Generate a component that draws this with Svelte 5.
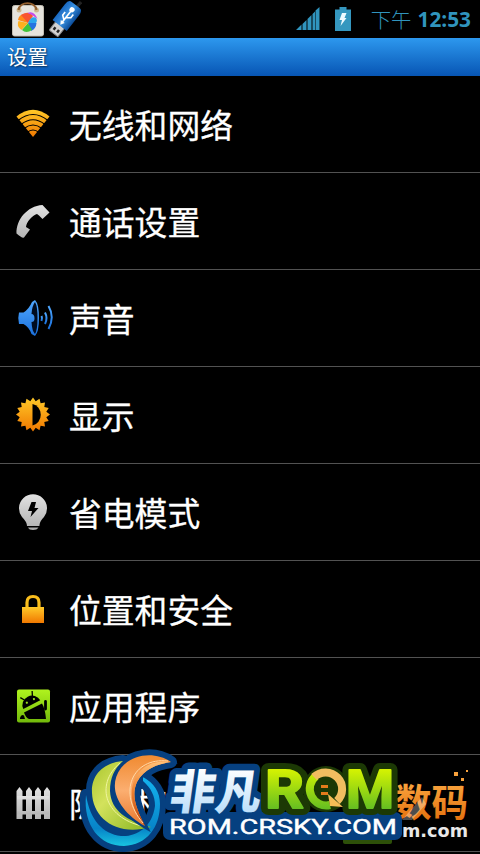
<script lang="ts">
  interface Item {
    icon: string;
    label: string;
  }

  const items: Item[] = [
    { icon: 'wifi', label: '无线和网络' },
    { icon: 'phone', label: '通话设置' },
    { icon: 'sound', label: '声音' },
    { icon: 'display', label: '显示' },
    { icon: 'power', label: '省电模式' },
    { icon: 'lock', label: '位置和安全' },
    { icon: 'apps', label: '应用程序' },
    { icon: 'privacy', label: '隐私权' },
  ];

  // 16-point sun outline around (18, 17.5)
  const sun = Array.from({ length: 32 }, (_, i) => {
    const r = i % 2 ? 13.6 : 17;
    const a = (i * Math.PI) / 16 - Math.PI / 2;
    return `${(18 + r * Math.cos(a)).toFixed(1)},${(17.5 + r * Math.sin(a)).toFixed(1)}`;
  }).join(' ');

  // emblem parts, drawn once as a navy halo and once filled
  const leaf = 'M123 761C101 763 91 777 92 793C93 818 116 837 151 827C127 821 111 811 110 791C110 777 115 768 123 761Z';
  const flame = 'M171 762C155 751 132 754 121 768C106 788 120 812 145 826C136 808 131 795 137 782C144 769 157 764 171 762Z';
  const ring = 'M86 795C83 826 100 846 124 846C147 845 160 827 160 804C160 792 154 783 143 777V781C151 788 155 796 155 806C152 828 136 837 121 836C103 834 90 820 86 795Z';
</script>

<div class="screen">
  <header class="statusbar">
    <svg class="market" width="34" height="38" viewBox="0 0 34 38">
      <rect x="1.500" y="5.500" width="31" height="30.500" rx="2" fill="#e6e4dd" stroke="#c2beb2" />
      <circle cx="8" cy="10" r="2.500" fill="#cdb98f" />
      <circle cx="25.500" cy="10" r="2.500" fill="#cdb98f" />
      <path d="M7.500 10C9 1 24 1 25.500 10" fill="none" stroke="#93602f" stroke-width="2.200" />
      <path d="M17 23L7 20Q8 13 16 14.500Z" fill="#ff8a18" />
      <path d="M17 23L10 15Q18 10 22 16Z" fill="#f9552f" />
      <path d="M16.500 13Q23 10 26.500 19Q22 14.500 16.500 13Z" fill="#c64bea" />
      <path d="M17 23Q20 16 24.500 17.500Q27 20 25 23Z" fill="#2aa7ed" />
      <path d="M17 23L25.500 23Q25 29 20 31Z" fill="#2473e0" />
      <path d="M17 23L21 30Q15 34 11 30Z" fill="#42c43a" />
      <path d="M17 23L10.500 30Q5 26 7.500 21Z" fill="#ffb01e" />
    </svg>
    <svg class="usb" width="36" height="38" viewBox="0 0 36 38">
      <path d="M29 9L35 2" stroke="#222" stroke-width="3" />
      <g transform="rotate(38 18 20)">
        <rect x="12.500" y="26" width="11" height="11" rx="1" fill="#d2d2d2" stroke="#888" />
        <rect x="14.500" y="31" width="2.500" height="3" fill="#222" />
        <rect x="19" y="31" width="2.500" height="3" fill="#222" />
        <path d="M9 7Q9 1 13 1H23Q27 1 27 7V27H9Z" fill="url(#usbBlue)" />
        <path d="M18 23V7M18 20L14 17V13M18 17L22 14V10" fill="none" stroke="#fff" stroke-width="1.600" />
        <path d="M18 26L15.500 22H20.500Z" fill="#fff" />
        <circle cx="18" cy="7" r="2.600" fill="#fff" />
      </g>
      <defs>
        <linearGradient id="usbBlue" x1="0" x2="1">
          <stop offset="0" stop-color="#1a68c0" />
          <stop offset=".5" stop-color="#3a92e2" />
          <stop offset="1" stop-color="#0b4b98" />
        </linearGradient>
      </defs>
    </svg>
    <span class="spacer"></span>
    <svg class="signal" width="24" height="24" viewBox="0 0 24 24">
      <path d="M0 23L5.500 17.500V23ZM6.500 23V17L10.500 13V23ZM11.500 23V12L15.500 8V23ZM16.500 23V7L19 4.500V23ZM19.500 23V3.500L23.500 0V23Z" fill="#3094bd" />
    </svg>
    <svg class="battery" width="16" height="24" viewBox="0 0 16 24">
      <path d="M0 2.500H4.500V0H11.500V2.500H16V24H0Z" fill="#3597bf" />
      <path d="M7 6H11.500L9.500 11H11.500L5.500 19L7 13H4.500Z" fill="#eefaff" />
    </svg>
    <span class="period">下午</span>
    <span class="clock">12:53</span>
  </header>

  <div class="titlebar">设置</div>

  <ul class="list">
    {#each items as item}
      <li class="row">
        <svg class="icon" width="38" height="38" viewBox="0 0 38 38">
          {#if item.icon === 'wifi'}
            <path d="M1.500 10.500Q18 -3 34.500 10.500L18 31Z" fill="url(#gold)" />
            <g fill="none" stroke="#000" stroke-width="1.200">
              <path d="M3 14.500Q18 2.500 33 14.500" />
              <path d="M6 18.500Q18 9 30 18.500" />
              <path d="M9 22.500Q18 15.500 27 22.500" />
              <path d="M12 26.500Q18 21.500 24 26.500" />
            </g>
          {:else if item.icon === 'phone'}
            <path d="M1.500 30.500C1 17 12 3 27.500 2L34.500 9.500L27.500 16L24 12.500L22 11C17 12.500 11.500 19 11 24L15 26.500L9 34.500Q7 35.500 1.500 30.500Z" fill="url(#silver)" />
          {:else if item.icon === 'sound'}
            <path d="M4 12.500H8.500Q14 9 17 2L20 0Q24 4 24 18Q24 32 20 36L16.500 34Q14 27 8.500 24H4Q2.500 18 4 12.500Z" fill="url(#blue)" />
            <path d="M20 2Q17 6 16.500 14Q19.500 14 19.500 18.500Q19.500 22 16.500 22Q17 31 20 34Q22.500 30 22.500 18Q22.500 6 20 2Z" fill="#000c20" />
            <g fill="none" stroke="url(#blue)" stroke-width="2">
              <path d="M26.500 16Q27.500 18 26.500 21" />
              <path d="M30 12.500Q33 18 30 24" />
              <path d="M33.500 6Q40 17 33.500 29" />
            </g>
          {:else if item.icon === 'display'}
            <polygon points={sun} fill="url(#gold)" />
            <path d="M17.500 7A10.500 11 0 0 1 17.500 28.500Z" fill="#000" />
          {:else if item.icon === 'power'}
            <path d="M12 32Q12 28 7 23A14 14 0 1 1 29 23Q24 28 24.500 32Z" fill="url(#silver)" />
            <path d="M13 33.500H23.500Q22 36 18 36Q14 36 13 33.500Z" fill="#aaa" />
            <path d="M16.500 8H21L19.500 14H23.500L15.500 23L17 17H13Z" fill="#000" />
          {:else if item.icon === 'lock'}
            <path d="M12 18V11.500Q12 5.500 18 5.500Q24 5.500 24 11.500V18" fill="none" stroke="#f9bd1c" stroke-width="3.200" />
            <rect x="7" y="16" width="22" height="16" fill="url(#gold)" />
          {:else if item.icon === 'apps'}
            <rect x="2" y="1.500" width="33" height="33" rx="2" fill="url(#lime)" />
            <g transform="rotate(-27 17 16)" fill="#000">
              <path d="M7 16.500A9 8.500 0 0 1 26 16.500Z" />
              <path d="M12 9L9.500 5M21 9L23 4.500" stroke="#000" stroke-width="1.300" />
              <circle cx="13" cy="12.500" r="1.100" fill="#9be31c" />
              <circle cx="21" cy="12.500" r="1.100" fill="#9be31c" />
            </g>
            <path d="M9 24.500L27 15.500Q30 20 31 31H14Q11 30 9 24.500Z" fill="#000" />
            <path d="M30.500 13.500V21" fill="none" stroke="#000" stroke-width="2.800" stroke-linecap="round" />
            <path d="M5 30Q6 26 9 27.500L10 31H5Z" fill="#000" />
          {:else}
            <g fill="url(#silver)">
              <path d="M1.500 34V6L4.500 2L7.500 6V34ZM11 34V6L14 2L17 6V34ZM20 34V6L23 2L26 6V34ZM29 34V6L32 2L35 6V34Z" />
              <path d="M2 11H34V14.500H2ZM2 26H34V29.500H2Z" />
            </g>
          {/if}
        </svg>
        <span class="label">{item.label}</span>
      </li>
    {/each}
  </ul>

  <!-- site marks lying over the bottom of the list -->
  <svg class="marks" width="410" height="110" viewBox="70 744 410 110">
    <g class="digital">
      <text x="395" y="816" textLength="73" lengthAdjust="spacingAndGlyphs">数码</text>
      <path d="M454 772h4v4h-4zM461 778h3v3h-3zM466 770h2v2h-2z" />
    </g>
    <path d="M402 820L422 797L426 804L412 820Z" fill="#fff" opacity=".3" />
    <text class="com" x="402" y="837" textLength="66" lengthAdjust="spacingAndGlyphs">m.com</text>
    <rect x="343" y="836" width="49" height="8" rx="2" fill="#2d5009" />

    <g class="emblem-halo">
      <path d={ring} />
      <path d={leaf} />
      <path d={flame} />
    </g>
    <path d={ring} fill="url(#ring)" />
    <path d={leaf} fill="url(#leaf)" />
    <path d="M120 763C94 785 105 820 147 827" fill="none" stroke="#f0f5a0" stroke-width="1" />
    <path class="gap" d={flame} fill="url(#flame)" />
    <path d="M171 762C135 756 118 795 145 826C136 808 131 795 137 782C144 769 157 764 171 762Z" fill="url(#ember)" />
    <path d="M168 761C132 757 117 793 143 823" fill="none" stroke="#ffd9a8" stroke-width="1" />

    <rect x="163" y="812" width="239" height="28" rx="7" fill="#064080" />
    <g class="brand" transform="translate(113 0) skewX(-8)">
      <text x="169" y="809" textLength="91" lengthAdjust="spacingAndGlyphs">非凡</text>
    </g>

    <g class="rom">
      <circle cx="326" cy="789" r="16" />
      <text class="shade" x="265" y="808" textLength="39" lengthAdjust="spacingAndGlyphs">R</text>
      <text class="shade" x="346" y="808" textLength="48" lengthAdjust="spacingAndGlyphs">M</text>
      <text x="265" y="808" textLength="39" lengthAdjust="spacingAndGlyphs">R</text>
      <text x="346" y="808" textLength="48" lengthAdjust="spacingAndGlyphs">M</text>
      <path d="M316 776A16.500 16.500 0 0 0 330 805" fill="none" stroke="url(#green)" stroke-width="8" />
      <path d="M314 777A16.500 16.500 0 1 1 337 801" fill="none" stroke="#f1bd60" stroke-width="8" />
      <path d="M328 794L343 807L330 806Z" fill="#f4bd56" />
      <path d="M321 785h7v3h-7zM321 792h7v3h-7z" fill="#e47b1b" />
    </g>
    <rect x="262" y="815" width="140" height="24" rx="7" fill="#064080" />
    <text class="site" x="169" y="834" textLength="228" lengthAdjust="spacingAndGlyphs">ROM.CRSKY.COM</text>
  </svg>

  <svg class="defs" width="0" height="0">
    <defs>
      <linearGradient id="gold" x2="0" y2="1">
        <stop offset="0" stop-color="#ffc928" />
        <stop offset="1" stop-color="#f07800" />
      </linearGradient>
      <linearGradient id="silver" x2="0" y2="1">
        <stop offset="0" stop-color="#e2e2e2" />
        <stop offset="1" stop-color="#b5b5b5" />
      </linearGradient>
      <linearGradient id="blue" x2="0" y2="1">
        <stop offset="0" stop-color="#50a8ff" />
        <stop offset="1" stop-color="#1a70dc" />
      </linearGradient>
      <linearGradient id="lime" x2="0" y2="1">
        <stop offset="0" stop-color="#b0f31e" />
        <stop offset="1" stop-color="#72b90b" />
      </linearGradient>
      <linearGradient id="green" gradientUnits="userSpaceOnUse" x1="0" y1="768" x2="0" y2="810">
        <stop offset="0" stop-color="#d9f500" />
        <stop offset="1" stop-color="#62bd22" />
      </linearGradient>
      <linearGradient id="ice" gradientUnits="userSpaceOnUse" x1="0" y1="768" x2="0" y2="814">
        <stop offset="0" stop-color="#fff" />
        <stop offset="1" stop-color="#b9defa" />
      </linearGradient>
      <linearGradient id="leaf" x2="1" y2="1">
        <stop offset="0" stop-color="#a8c52c" />
        <stop offset=".4" stop-color="#d3e25c" />
        <stop offset="1" stop-color="#87b420" />
      </linearGradient>
      <linearGradient id="flame" x2="0" y2="1">
        <stop offset="0" stop-color="#f08a30" />
        <stop offset=".5" stop-color="#fbae70" />
        <stop offset="1" stop-color="#e8772c" />
      </linearGradient>
      <linearGradient id="ember" x2="0" y2="1">
        <stop offset="0" stop-color="#ffc078" />
        <stop offset=".45" stop-color="#ec8232" />
        <stop offset="1" stop-color="#b93f08" />
      </linearGradient>
      <linearGradient id="ring" x2="0" y2="1">
        <stop offset="0" stop-color="#14b4f0" />
        <stop offset=".75" stop-color="#0784c8" />
        <stop offset="1" stop-color="#18c4e0" />
      </linearGradient>
      <linearGradient id="amber" gradientUnits="userSpaceOnUse" x1="0" y1="784" x2="0" y2="820">
        <stop offset="0" stop-color="#f8a23c" />
        <stop offset="1" stop-color="#e4720f" />
      </linearGradient>
    </defs>
  </svg>
</div>

<style>
  :global(body) {
    margin: 0;
    background: #000;
  }

  .screen {
    position: relative;
    width: 480px;
    height: 854px;
    overflow: hidden;
    background: #000;
    color: #fff;
    font-family: 'Noto Sans CJK SC', sans-serif;
  }

  .statusbar {
    display: flex;
    align-items: center;
    height: 38px;
    padding: 0 9px 0 11px;
    color: #3094bd;
  }

  .usb {
    margin-left: 1px;
  }

  .spacer {
    flex: 1;
  }

  .signal {
    margin-right: 15px;
  }

  .battery {
    margin-right: 20px;
  }

  .period {
    margin-right: 6px;
    font-size: 20.4px;
    font-weight: 300;
    line-height: 38px;
  }

  .clock {
    font-family: 'Open Sans', sans-serif;
    font-size: 20.8px;
    font-weight: 700;
    line-height: 38px;
  }

  .titlebar {
    height: 38px;
    padding-left: 7px;
    background: linear-gradient(#2d98ee, #0755b4);
    font-size: 20.4px;
    line-height: 36px;
    text-shadow: 1px 1px 2px rgba(0, 0, 0, 0.6);
  }

  .list {
    margin: 0;
    padding: 0;
    list-style: none;
  }

  .row {
    display: flex;
    align-items: center;
    height: 96px;
    padding-left: 15px;
    border-bottom: 1px solid #525252;
  }

  .icon {
    margin-top: 1px;
    margin-right: 16px;
  }

  .label {
    font-size: 32.8px;
    line-height: 48px;
    white-space: nowrap;
    -webkit-text-stroke: 0.3px #fff;
  }

  .marks {
    position: absolute;
    right: 0;
    bottom: 0;
  }

  .defs {
    position: absolute;
  }

  .digital {
    fill: url(#amber);
    font-size: 38px;
    font-weight: 700;
  }

  .com {
    fill: #e8e8e8;
    font-family: 'DejaVu Sans', sans-serif;
    font-size: 18px;
    font-weight: 700;
  }

  .emblem-halo {
    fill: #064080;
    stroke: #064080;
    stroke-width: 12px;
    stroke-linejoin: round;
  }

  .gap {
    stroke: #064080;
    stroke-width: 5px;
    paint-order: stroke;
  }

  .brand text {
    fill: url(#ice);
    stroke: #064080;
    stroke-width: 13px;
    stroke-linejoin: round;
    paint-order: stroke;
    font-size: 47px;
    font-weight: 900;
  }

  .rom text {
    fill: url(#green);
    stroke: url(#green);
    stroke-width: 2px;
    stroke-linejoin: round;
    font-family: Roboto, sans-serif;
    font-size: 54px;
    font-weight: 700;
  }
  .rom .shade,
  .rom circle {
    fill: #1c3905;
    stroke: #1c3905;
    stroke-width: 14px;
  }

  .site {
    fill: #fff;
    stroke: #fff;
    stroke-width: 0.4px;
    font-family: Roboto, sans-serif;
    font-size: 20px;
    font-weight: 400;
  }
</style>
